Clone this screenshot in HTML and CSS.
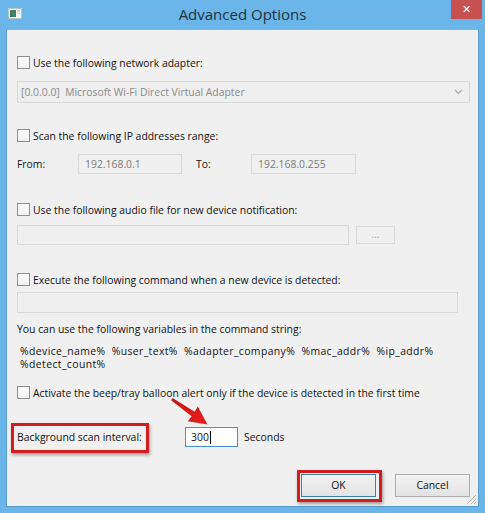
FILE: index.html
```html
<!DOCTYPE html>
<html>
<head>
<meta charset="utf-8">
<link rel="stylesheet" href="styles.css">
</head>
<body>
<div class="window">
  <div class="titlebar">
    <div class="icon-cell">
      <svg class="app-icon" width="14" height="11" viewBox="0 0 14 11">
        <rect x="0.5" y="0.5" width="13" height="10" fill="#f4f6f4" stroke="#b7c3c9"/>
        <rect x="2" y="2" width="6" height="7" fill="#3f7f66"/>
        <rect x="9" y="2" width="3" height="2" fill="#c9d3d6"/>
        <rect x="9" y="5" width="3" height="1" fill="#c9d3d6"/>
      </svg>
    </div>
    <div class="title">Advanced Options</div>
    <div class="close-cell"><div class="close">✕</div></div>
  </div>

  <div class="client">
    <label class="check r1"><span class="box"></span><span>Use the following network adapter:</span></label>
    <div class="combo">
      <span>[0.0.0.0]&nbsp; Microsoft Wi-Fi Direct Virtual Adapter</span>
      <svg class="chev" width="9" height="6" viewBox="0 0 9 6"><path d="M1 1 L4.5 4.5 L8 1" fill="none" stroke="#a9a9a9" stroke-width="1.2"/></svg>
    </div>

    <label class="check r2"><span class="box"></span><span>Scan the following IP addresses range:</span></label>
    <div class="range">
      <span class="lbl-from">From:</span>
      <div class="field ip-from">192.168.0.1</div>
      <span class="lbl-to">To:</span>
      <div class="field ip-to">192.168.0.255</div>
    </div>

    <label class="check r3"><span class="box"></span><span>Use the following audio file for new device notification:</span></label>
    <div class="audio">
      <div class="field audio-field"></div>
      <div class="btn-dots">...</div>
    </div>

    <label class="check r4"><span class="box"></span><span>Execute the following command when a new device is detected:</span></label>
    <div class="field cmd-field"></div>

    <div class="hint">You can use the following variables in the command string:</div>
    <div class="vars">
      <div class="var-line">&nbsp;%device_name%&nbsp; %user_text%&nbsp; %adapter_company%&nbsp; %mac_addr%&nbsp; %ip_addr%</div>
      <div class="var-line">&nbsp;%detect_count%</div>
    </div>

    <label class="check r5"><span class="box"></span><span>Activate the beep/tray balloon alert only if the device is detected in the first time</span></label>

    <div class="interval">
      <span class="interval-label">Background scan interval:</span>
      <div class="field-active">300<span class="caret"></span></div>
      <span class="seconds">Seconds</span>
    </div>

    <div class="buttons">
      <div class="btn btn-ok">OK</div>
      <div class="btn btn-cancel">Cancel</div>
    </div>

    <svg class="grip" width="13" height="13" viewBox="0 0 13 13">
      <path d="M12 3 L3 12 M12 7 L7 12 M12 10 L10 12" stroke="#b8b8b8" stroke-width="1" fill="none"/>
    </svg>
  </div>

  <svg class="arrow" width="485" height="513" viewBox="0 0 485 513">
    <defs>
      <linearGradient id="ag" x1="0" y1="0" x2="1" y2="1">
        <stop offset="0" stop-color="#c81010"/>
        <stop offset="1" stop-color="#e82020"/>
      </linearGradient>
    </defs>
    <polygon points="172.6,398 194.6,411.8 197.8,406.6 207.5,424.5 187.8,421.2 191.6,416.2 171.2,400.2" fill="url(#ag)"/>
  </svg>
</div>
</body>
</html>
```

FILE: styles.css
```css
*, *::before, *::after { box-sizing: border-box; }
html, body { margin: 0; padding: 0; }
body {
  width: 485px;
  height: 513px;
  overflow: hidden;
  font-family: "Open Sans", "Noto Sans", sans-serif;
  font-size: 10.4px;
  color: #111;
}
.window {
  position: relative;
  width: 485px;
  height: 513px;
  background: #6ab6e8;
  display: flex;
  flex-direction: column;
}
.titlebar {
  height: 29px;
  display: grid;
  grid-template-columns: 34px 1fr 34px;
  align-items: start;
}
.icon-cell { padding: 8px 0 0 8px; }
.app-icon { display: block; }
.title {
  text-align: center;
  font-size: 15px;
  color: #22313f;
  line-height: 28px;
}
.close-cell { display: flex; justify-content: flex-end; padding-right: 3px; }
.close {
  width: 31px;
  height: 19px;
  background: #c75050;
  color: #fff;
  font-size: 11px;
  line-height: 19px;
  text-align: center;
  font-family: "DejaVu Sans", sans-serif;
  font-weight: bold;
}
.client {
  position: relative;
  flex: 1;
  margin: 0 6px 6px 6px;
  background: #f0f0f0;
  border: 1px solid #5a9ccc;
  border-top-color: #7fb8de;
  padding: 25px 8px 0 10px;
  display: flex;
  flex-direction: column;
  align-items: flex-start;
}
.check {
  display: flex;
  align-items: center;
  height: 15px;
  white-space: nowrap;
}
.box {
  width: 13px;
  height: 13px;
  border: 1px solid #8e8e8e;
  background: linear-gradient(#fbfbfb, #f1f1f1);
  margin-right: 3px;
  flex: none;
}
.r1 { margin-top: 0; }
.combo {
  margin-top: 11px;
  width: 453px;
  height: 22px;
  border: 1px solid #d9d9d9;
  background: #efefef;
  color: #8a8a8a;
  display: flex;
  align-items: center;
  justify-content: space-between;
  padding: 0 6px 0 3px;
}
.r2 { margin-top: 25px; }
.range {
  margin-top: 11px;
  display: flex;
  align-items: center;
  height: 20px;
}
.lbl-from { width: 61px; }
.lbl-to { margin-left: 14px; width: 55px; }
.field {
  height: 20px;
  border: 1px solid #d9d9d9;
  background: #f0f0f0;
  color: #7a7a7a;
  padding-left: 6px;
  line-height: 18px;
}
.ip-from { width: 104px; }
.ip-to { width: 105px; }
.r3 { margin-top: 28px; }
.audio {
  margin-top: 8px;
  display: flex;
  align-items: center;
  gap: 7px;
}
.audio-field { width: 332px; }
.btn-dots {
  width: 39px;
  height: 18px;
  border: 1px solid #d9d9d9;
  background: #f0f0f0;
  color: #a8a8a8;
  text-align: center;
  line-height: 14px;
  font-size: 10px;
}
.r4 { margin-top: 27px; }
.cmd-field { margin-top: 5px; width: 441px; height: 21px; }
.hint { margin-top: 9px; line-height: 15px; }
.vars { margin-top: 8px; }
.var-line { height: 13px; line-height: 13px; white-space: nowrap; letter-spacing: 0.4px; }
.r5 { margin-top: 14px; }
.interval {
  margin-top: 27px;
  display: flex;
  align-items: center;
  height: 20px;
}
.interval-label {
  position: relative;
  width: 168px;
}
.interval-label::after {
  content: "";
  position: absolute;
  left: -6px;
  top: -7px;
  width: 138px;
  height: 30px;
  border: 3px solid #d41c1c;
  box-shadow: 1px 2px 3px rgba(0,0,0,0.35);
}
.field-active {
  width: 53px;
  height: 20px;
  border: 1px solid #4a8ed0;
  background: #fff;
  color: #111;
  padding-left: 5px;
  line-height: 18px;
  display: flex;
  align-items: center;
}
.caret {
  display: inline-block;
  width: 1px;
  height: 13px;
  background: #000;
  margin-left: 1px;
}
.seconds { margin-left: 6px; }
.buttons {
  margin-top: 27px;
  align-self: flex-end;
  display: flex;
  gap: 19px;
}
.btn {
  width: 75px;
  height: 23px;
  text-align: center;
  line-height: 21px;
  background: linear-gradient(#f2f2f2, #e3e3e3);
  border: 1px solid #acacac;
  color: #111;
}
.btn-ok {
  position: relative;
  border-color: #3c7fb1;
}
.btn-ok::after {
  content: "";
  position: absolute;
  left: -5px;
  top: -5px;
  right: -7px;
  bottom: -6px;
  border: 3px solid #d41c1c;
  box-shadow: 1px 2px 3px rgba(0,0,0,0.35);
}
.grip {
  position: absolute;
  right: 1px;
  bottom: 1px;
}
.arrow {
  position: absolute;
  left: 0;
  top: 0;
  pointer-events: none;
}
```
